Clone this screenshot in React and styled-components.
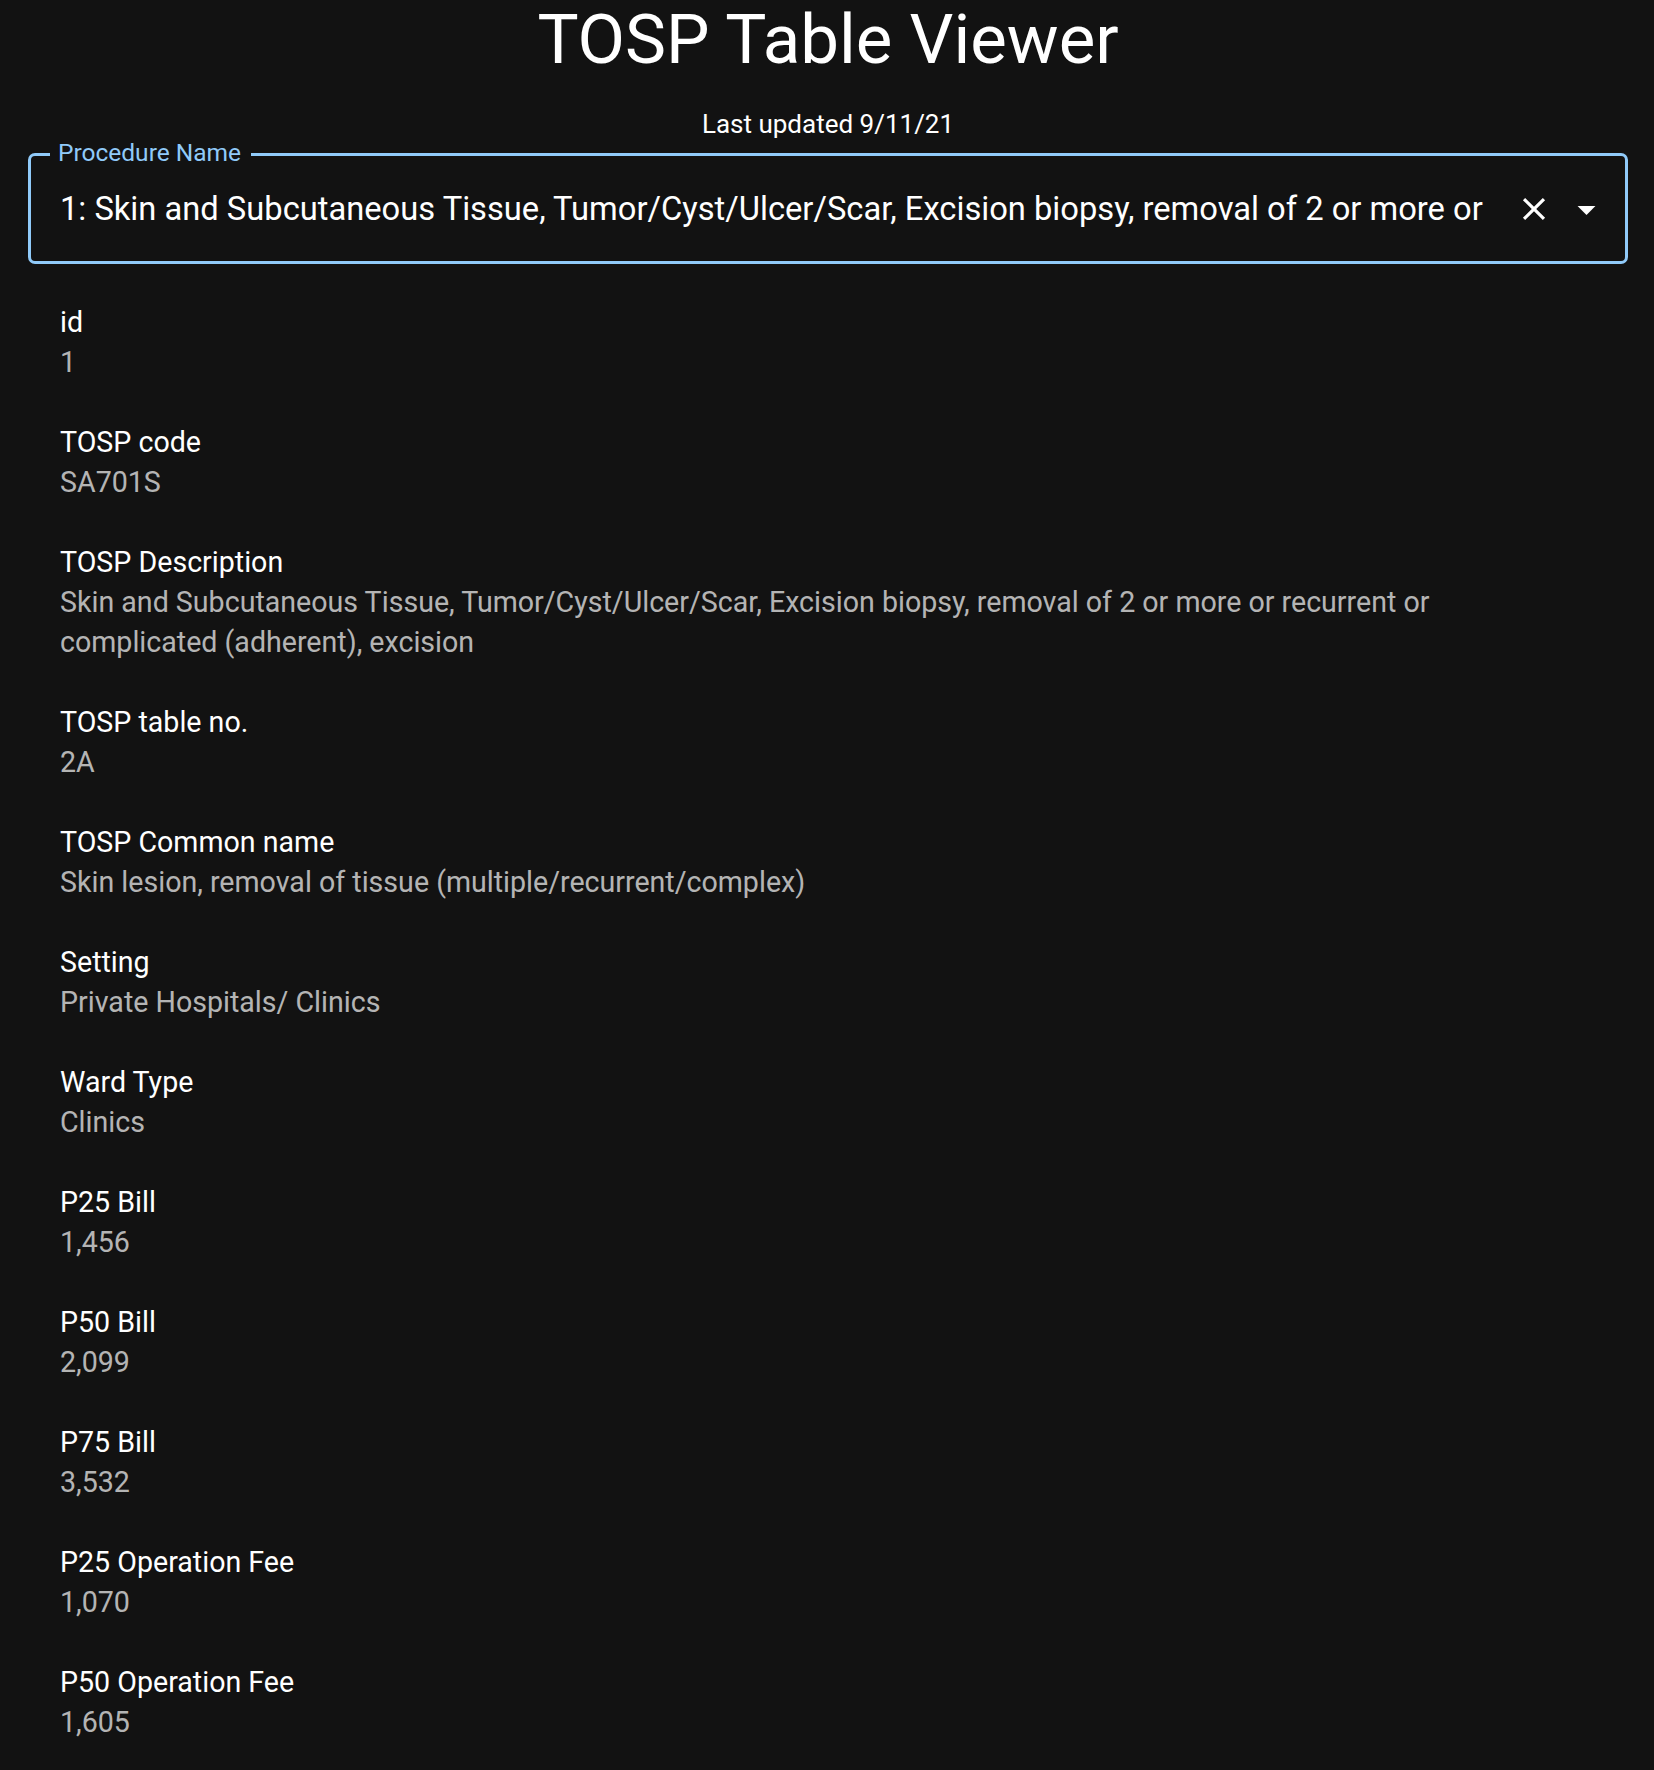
import React from "react";
import styled, { createGlobalStyle } from "styled-components";

const GlobalStyle = createGlobalStyle`
  html, body {
    margin: 0;
    padding: 0;
    background: #121212;
  }
  body {
    font-family: Roboto, "Noto Sans", "Liberation Sans", sans-serif;
    color: #ffffff;
  }
`;

const Page = styled.div`
  min-height: 1770px;
  background: #121212;
  padding: 0 26px 0 28px;
  box-sizing: border-box;
`;

const Title = styled.h1`
  margin: 0;
  font-size: 69px;
  line-height: 80px;
  font-weight: 400;
  text-align: center;
  color: #ffffff;
`;

const Subtitle = styled.div`
  margin-top: 24px;
  font-size: 26px;
  line-height: 40px;
  text-align: center;
  color: #ffffff;
`;

const Field = styled.fieldset`
  margin: -4px 0 0 0;
  padding: 0 17px 0 29px;
  height: 124px;
  box-sizing: border-box;
  border: 3px solid #90caf9;
  border-radius: 7px;
  display: flex;
  align-items: center;
  min-width: 0;
`;

const Legend = styled.legend`
  margin-left: -10px;
  padding: 0 10px 0 8px;
  font-size: 24.5px;
  line-height: 28px;
  color: #90caf9;
  position: relative;
  top: -1px;
`;

const InputText = styled.div`
  flex: 1;
  min-width: 0;
  overflow: hidden;
  white-space: nowrap;
  font-size: 32.7px;
  line-height: 44px;
  color: #ffffff;
  margin-top: -12px;
  margin-right: 28px;
`;

const IconButton = styled.span`
  display: flex;
  align-items: center;
  justify-content: center;
  color: #ffffff;
  margin-top: -11px;
  margin-left: ${(p) => p.$gap || 0}px;
`;

const Fields = styled.dl`
  margin: 38px 0 0 0;
  padding: 0 0 0 32px;
  max-width: 1480px;
`;

const Label = styled.dt`
  font-size: 28.6px;
  line-height: 40px;
  color: #ffffff;
`;

const Value = styled.dd`
  margin: 0 0 40px 0;
  font-size: 28.6px;
  line-height: 40px;
  color: rgba(255, 255, 255, 0.7);
`;

const CloseIcon = () => (
  <svg width="38" height="38" viewBox="0 0 24 24" fill="currentColor">
    <path d="M19 6.41L17.59 5 12 10.59 6.41 5 5 6.41 10.59 12 5 17.59 6.41 19 12 13.41 17.59 19 19 17.59 13.41 12z" />
  </svg>
);

const ArrowIcon = () => (
  <svg width="43" height="43" viewBox="0 0 24 24" fill="currentColor">
    <path d="M7 10l5 5 5-5z" />
  </svg>
);

const rows = [
  ["id", "1"],
  ["TOSP code", "SA701S"],
  [
    "TOSP Description",
    "Skin and Subcutaneous Tissue, Tumor/Cyst/Ulcer/Scar, Excision biopsy, removal of 2 or more or recurrent or complicated (adherent), excision",
  ],
  ["TOSP table no.", "2A"],
  ["TOSP Common name", "Skin lesion, removal of tissue (multiple/recurrent/complex)"],
  ["Setting", "Private Hospitals/ Clinics"],
  ["Ward Type", "Clinics"],
  ["P25 Bill", "1,456"],
  ["P50 Bill", "2,099"],
  ["P75 Bill", "3,532"],
  ["P25 Operation Fee", "1,070"],
  ["P50 Operation Fee", "1,605"],
];

export default function App() {
  return (
    <Page>
      <GlobalStyle />
      <Title>TOSP Table Viewer</Title>
      <Subtitle>Last updated 9/11/21</Subtitle>
      <Field>
        <Legend>Procedure Name</Legend>
        <InputText>
          1: Skin and Subcutaneous Tissue, Tumor/Cyst/Ulcer/Scar, Excision biopsy, removal of 2 or more or recurrent or complicated (adherent), excision
        </InputText>
        <IconButton>
          <CloseIcon />
        </IconButton>
        <IconButton $gap={12}>
          <ArrowIcon />
        </IconButton>
      </Field>
      <Fields>
        {rows.map(([k, v]) => (
          <React.Fragment key={k}>
            <Label>{k}</Label>
            <Value>{v}</Value>
          </React.Fragment>
        ))}
      </Fields>
    </Page>
  );
}
